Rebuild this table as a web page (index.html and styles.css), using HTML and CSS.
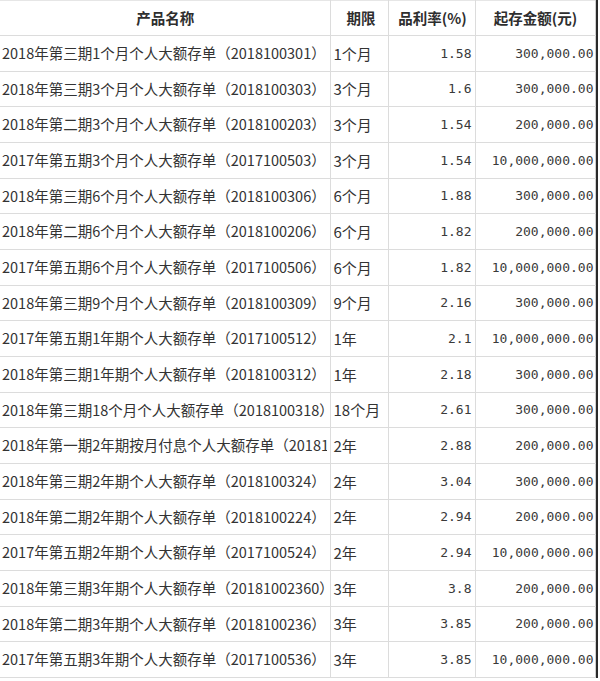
FILE: index.html
```html
<!DOCTYPE html>
<html lang="zh-CN">
<head>
<meta charset="utf-8">
<title>大额存单</title>
<link rel="stylesheet" href="styles.css">
</head>
<body>
<div class="frame">
<table class="rates">
<colgroup>
<col class="c-name"><col class="c-term"><col class="c-rate"><col class="c-amt">
</colgroup>
<thead>
<tr><th>产品名称</th><th class="h-term">期限</th><th class="h-rate">品利率(%)</th><th>起存金额(元)</th></tr>
</thead>
<tbody>
<tr><td class="name">2018年第三期1个月个人大额存单（2018100301）</td><td class="term">1个月</td><td class="num">1.58</td><td class="num amt">300,000.00</td></tr>
<tr><td class="name">2018年第三期3个月个人大额存单（2018100303）</td><td class="term">3个月</td><td class="num">1.6</td><td class="num amt">300,000.00</td></tr>
<tr><td class="name">2018年第二期3个月个人大额存单（2018100203）</td><td class="term">3个月</td><td class="num">1.54</td><td class="num amt">200,000.00</td></tr>
<tr><td class="name">2017年第五期3个月个人大额存单（2017100503）</td><td class="term">3个月</td><td class="num">1.54</td><td class="num amt">10,000,000.00</td></tr>
<tr><td class="name">2018年第三期6个月个人大额存单（2018100306）</td><td class="term">6个月</td><td class="num">1.88</td><td class="num amt">300,000.00</td></tr>
<tr><td class="name">2018年第二期6个月个人大额存单（2018100206）</td><td class="term">6个月</td><td class="num">1.82</td><td class="num amt">200,000.00</td></tr>
<tr><td class="name">2017年第五期6个月个人大额存单（2017100506）</td><td class="term">6个月</td><td class="num">1.82</td><td class="num amt">10,000,000.00</td></tr>
<tr><td class="name">2018年第三期9个月个人大额存单（2018100309）</td><td class="term">9个月</td><td class="num">2.16</td><td class="num amt">300,000.00</td></tr>
<tr><td class="name">2017年第五期1年期个人大额存单（2017100512）</td><td class="term">1年</td><td class="num">2.1</td><td class="num amt">10,000,000.00</td></tr>
<tr><td class="name">2018年第三期1年期个人大额存单（2018100312）</td><td class="term">1年</td><td class="num">2.18</td><td class="num amt">300,000.00</td></tr>
<tr><td class="name">2018年第三期18个月个人大额存单（2018100318）</td><td class="term">18个月</td><td class="num">2.61</td><td class="num amt">300,000.00</td></tr>
<tr><td class="name"><span class="clip">2018年第一期2年期按月付息个人大额存单（2018100224）</span></td><td class="term">2年</td><td class="num">2.88</td><td class="num amt">200,000.00</td></tr>
<tr><td class="name">2018年第三期2年期个人大额存单（2018100324）</td><td class="term">2年</td><td class="num">3.04</td><td class="num amt">300,000.00</td></tr>
<tr><td class="name">2018年第二期2年期个人大额存单（2018100224）</td><td class="term">2年</td><td class="num">2.94</td><td class="num amt">200,000.00</td></tr>
<tr><td class="name">2017年第五期2年期个人大额存单（2017100524）</td><td class="term">2年</td><td class="num">2.94</td><td class="num amt">10,000,000.00</td></tr>
<tr><td class="name">2018年第三期3年期个人大额存单（20181002360）</td><td class="term">3年</td><td class="num">3.8</td><td class="num amt">200,000.00</td></tr>
<tr><td class="name">2018年第二期3年期个人大额存单（2018100236）</td><td class="term">3年</td><td class="num">3.85</td><td class="num amt">200,000.00</td></tr>
<tr><td class="name">2017年第五期3年期个人大额存单（2017100536）</td><td class="term">3年</td><td class="num">3.85</td><td class="num amt">10,000,000.00</td></tr>
</tbody>
</table>
</div>
</body>
</html>
```

FILE: styles.css
```css
html, body {
  margin: 0;
  padding: 0;
  background: #ffffff;
}

.frame {
  width: 596px;
  border-right: 2px solid #2a2a2a;
  overflow: hidden;
}

.rates {
  border-collapse: collapse;
  table-layout: fixed;
  width: 595px;
  color: #333333;
  font-family: "Noto Sans CJK SC", "Noto Sans", sans-serif;
  font-size: 14.5px;
}

.c-name { width: 330px; }
.c-term { width: 58px; }
.c-rate { width: 87px; }
.c-amt { width: 120px; }

.rates th,
.rates td {
  border: 1px solid #dcdcdc;
  padding: 0 2px 0 3px;
  height: 34.67px;
  white-space: nowrap;
  overflow: hidden;
  line-height: 1;
  vertical-align: middle;
}

.rates tr > *:first-child {
  border-left: none;
}

.rates tr > *:last-child {
  border-right: 1px solid #cfcfcf;
}

.rates thead th {
  height: 34px;
  border-top: 1px solid #e6e6e6;
  font-weight: bold;
  font-size: 14.5px;
  text-align: center;
  color: #2e2e2e;
}

.rates .h-term { text-align: right; padding-right: 12px; }
.rates .h-rate { text-align: center; padding: 0 0 0 2px; }

.rates td.name {
  text-align: left;
  padding-left: 2px;
  padding-right: 0;
}

.clip {
  display: block;
  width: 325px;
  overflow: hidden;
}

.rates td.term {
  text-align: left;
  font-size: 15px;
  padding-left: 3px;
}

.num {
  text-align: right;
  font-family: "DejaVu Sans Mono", "Liberation Mono", monospace;
  font-size: 13px;
  color: #3a3a3a;
}

.rates td.num { padding-right: 3px; }
.rates td.amt { padding-right: 1px; }
```
